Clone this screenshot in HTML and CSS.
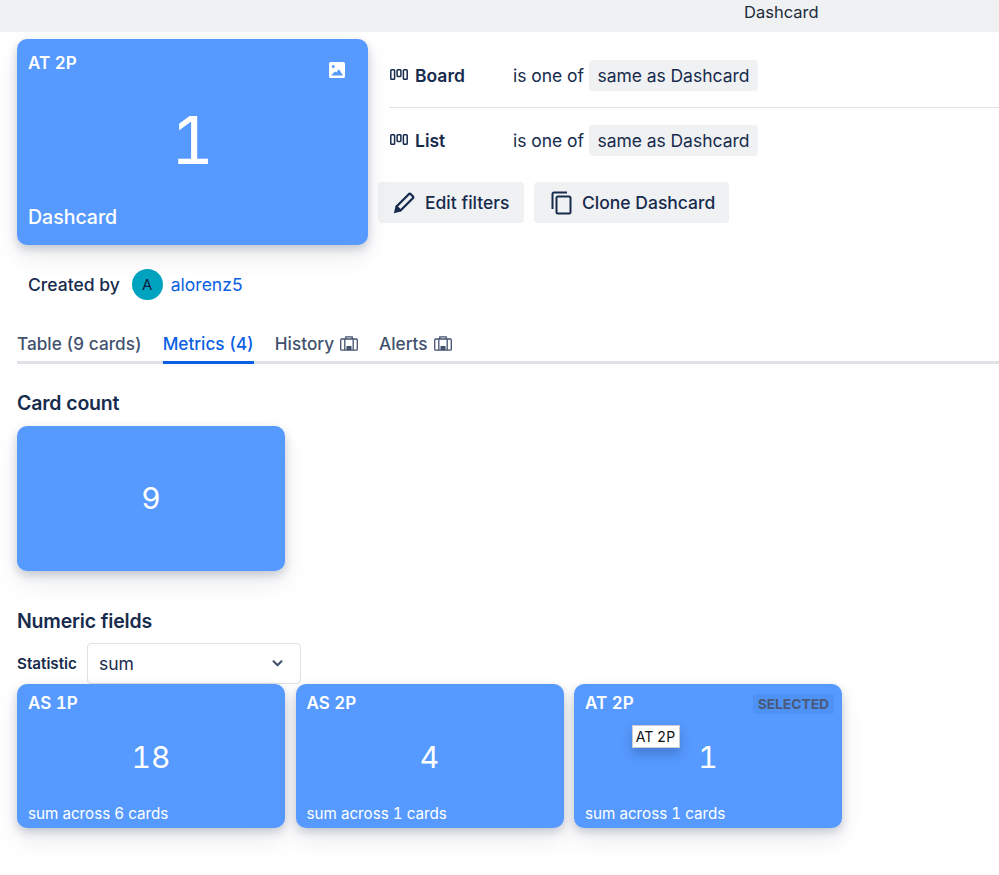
FILE: index.html
```html
<!DOCTYPE html>
<html lang="en">
<head>
<meta charset="utf-8">
<title>Dashcard</title>
<link rel="stylesheet" href="styles.css">
</head>
<body>
<header class="topbar"><span class="topbar-title">Dashcard</span></header>
<main class="page">
  <section class="hero">
    <div class="left-col">
      <div class="card card-hero">
        <div class="card-head">
          <span class="card-title-lg">AT 2P</span>
          <svg class="image-icon" viewBox="0 0 16 16" width="16" height="16"><path fill="#fff" fill-rule="evenodd" d="M1.5 0h13A1.5 1.5 0 0 1 16 1.5v13a1.5 1.5 0 0 1-1.500 1.500h-13A1.500 1.500 0 0 1 0 14.500v-13A1.500 1.500 0 0 1 1.500 0zM4.300 3a1.500 1.500 0 1 0 0 3 1.500 1.500 0 0 0 0-3zM2 13.500h12l-2.800-4.200-1.500-2-2.300 3.300-1.300-1.100z"/></svg>
        </div>
        <div class="hero-value">1</div>
        <div class="hero-foot">Dashcard</div>
      </div>
      <div class="created">
        <span>Created by</span>
        <span class="avatar">A</span>
        <a class="user">alorenz5</a>
      </div>
    </div>
    <div class="right-col">
      <div class="filter-row filter-row-first">
        <svg class="trello" viewBox="0 0 18 11" width="18" height="11"><g fill="none" stroke="#172b4d" stroke-width="1.500"><rect x=".8" y=".8" width="3.800" height="9.400" rx=".8"/><rect x="7.100" y=".8" width="3.800" height="6.600" rx=".8"/><rect x="13.400" y=".8" width="3.800" height="9.400" rx=".8"/></g></svg>
        <span class="filter-name">Board</span>
        <span class="filter-op">is one of</span>
        <span class="chip">same as Dashcard</span>
      </div>
      <div class="filter-row">
        <svg class="trello" viewBox="0 0 18 11" width="18" height="11"><g fill="none" stroke="#172b4d" stroke-width="1.500"><rect x=".8" y=".8" width="3.800" height="9.400" rx=".8"/><rect x="7.100" y=".8" width="3.800" height="6.600" rx=".8"/><rect x="13.400" y=".8" width="3.800" height="9.400" rx=".8"/></g></svg>
        <span class="filter-name">List</span>
        <span class="filter-op">is one of</span>
        <span class="chip">same as Dashcard</span>
      </div>
      <div class="actions">
        <button class="btn btn-edit">
          <svg viewBox="0 0 22 22" width="22" height="22"><path fill="none" stroke="#172b4d" stroke-width="2.300" stroke-linejoin="round" d="M15.800 2.200a1.500 1.500 0 0 1 2 0l2 2a1.500 1.500 0 0 1 0 2L7.500 18.500l-4-4z"/><path fill="#172b4d" d="M.8 21.200l1.800-7 5.200 5.200z"/></svg>
          <span>Edit filters</span>
        </button>
        <button class="btn btn-clone">
          <svg viewBox="0 0 21 24" width="21" height="24"><path fill="none" stroke="#172b4d" stroke-width="2" d="M16 1.500H3A1.500 1.500 0 0 0 1.500 3v15"/><rect x="5.500" y="5.500" width="14" height="17" rx="1.500" fill="none" stroke="#172b4d" stroke-width="2"/></svg>
          <span>Clone Dashcard</span>
        </button>
      </div>
    </div>
  </section>

  <nav class="tabs">
    <span class="tab">Table (9 cards)</span>
    <span class="tab tab-active">Metrics (4)</span>
    <span class="tab">History
      <svg class="case" viewBox="0 0 18 15" width="18" height="15"><path fill="none" stroke="#42526e" stroke-width="1.300" d="M5.800 3V.8h6.400V3M4.800 3v11M13.200 3v11"/><rect x=".7" y="3" width="16.600" height="11.200" rx="1" fill="none" stroke="#42526e" stroke-width="1.300"/><rect x="6.500" y="10" width="5" height="4" fill="#42526e"/></svg>
    </span>
    <span class="tab">Alerts
      <svg class="case" viewBox="0 0 18 15" width="18" height="15"><path fill="none" stroke="#42526e" stroke-width="1.300" d="M5.800 3V.8h6.400V3M4.800 3v11M13.200 3v11"/><rect x=".7" y="3" width="16.600" height="11.200" rx="1" fill="none" stroke="#42526e" stroke-width="1.300"/><rect x="6.500" y="10" width="5" height="4" fill="#42526e"/></svg>
    </span>
  </nav>

  <h2 class="section-title title-count">Card count</h2>
  <div class="card card-metric card-count"><span class="metric-value">9</span></div>

  <h2 class="section-title title-numeric">Numeric fields</h2>
  <div class="stat-row">
    <label class="stat-label">Statistic</label>
    <div class="select">
      <span>sum</span>
      <svg viewBox="0 0 12 8" width="11" height="7"><path fill="none" stroke="#42526e" stroke-width="2.400" stroke-linecap="round" stroke-linejoin="round" d="M1.500 1.500L6 6l4.500-4.500"/></svg>
    </div>
  </div>
  <div class="metric-grid">
    <div class="card card-metric">
      <div class="card-head"><span class="card-title">AS 1P</span></div>
      <span class="metric-value">18</span>
      <div class="card-foot">sum across 6 cards</div>
    </div>
    <div class="card card-metric">
      <div class="card-head"><span class="card-title">AS 2P</span></div>
      <span class="metric-value">4</span>
      <div class="card-foot">sum across 1 cards</div>
    </div>
    <div class="card card-metric">
      <div class="card-head"><span class="card-title">AT 2P</span><span class="selected">SELECTED</span></div>
      <span class="metric-value">1</span>
      <div class="card-foot">sum across 1 cards</div>
      <div class="tooltip">AT 2P</div>
    </div>
  </div>
</main>
</body>
</html>
```
FILE: styles.css
```css
* { box-sizing: border-box; }
html, body { margin: 0; padding: 0; }
body {
  width: 999px;
  height: 875px;
  overflow: hidden;
  background: #fff;
  color: #172b4d;
  font-family: Inter, "Liberation Sans", sans-serif;
  font-size: 17.5px;
  font-variant-numeric: tabular-nums;
}
.topbar {
  height: 32px;
  background: #f0f1f3;
  display: flex;
  justify-content: flex-start;
  padding-left: 744px;
  padding-top: 2px;
  color: #202a3a;
  font-size: 16.500px;
  line-height: 20px;
}
.page { padding: 7px 0 0 17px; }
.hero { display: flex; }
.left-col { width: 351px; flex: none; }
.card {
  position: relative;
  background: #579aff;
  color: #fff;
  border-radius: 10px;
  box-shadow: 0 4px 10px rgba(9, 30, 66, 0.2), 0 12px 26px rgba(9, 30, 66, 0.08);
}
.card-hero {
  height: 206px;
  padding: 13px 11px 16px;
  display: flex;
  flex-direction: column;
}
.card-head {
  display: flex;
  justify-content: space-between;
  align-items: flex-start;
}
.card-title-lg { font-size: 17px; font-weight: 600; line-height: 22px; }
.image-icon { margin: 10px 12px 0 0; }
.hero-value {
  flex: 1;
  display: flex;
  align-items: center;
  justify-content: center;
  font-size: 66px;
  line-height: 80px;
  padding-bottom: 4px;
}
.hero-foot { font-size: 19.500px; font-weight: 500; line-height: 24px; }
.created {
  display: flex;
  align-items: center;
  margin-top: 23px;
  padding-left: 11px;
  height: 32px;
  font-weight: 500;
}
.avatar {
  width: 31px;
  height: 31px;
  border-radius: 50%;
  background: #00a3bf;
  color: #091e42;
  font-weight: 400;
  font-size: 15px;
  display: flex;
  align-items: center;
  justify-content: center;
  margin: 0 8px 0 12px;
}
.user { color: #0b5fe3; font-weight: 400; }
.right-col { margin-left: 10px; flex: 1; min-width: 0; }
.filter-row {
  display: flex;
  align-items: center;
  margin-left: 11px;
  height: 64px;
}
.filter-row-first {
  margin-top: 5px;
  border-bottom: 1px solid #dfe1e6;
}
.trello { flex: none; margin: -2px 7px 0 1px; }
.filter-name { width: 98px; font-weight: 600; }
.filter-op { margin-right: 5px; }
.chip {
  background: #f0f1f3;
  border-radius: 4px;
  height: 31px;
  line-height: 32px;
  padding: 0 8.500px;
}
.actions { display: flex; gap: 10px; margin-top: 10px; }
.btn {
  display: flex;
  align-items: center;
  height: 41px;
  border: 0;
  border-radius: 4px;
  background: #f0f1f3;
  color: #172b4d;
  font: inherit;
  font-weight: 500;
}
.btn-edit { width: 146px; padding: 0 0 0 15px; gap: 10px; }
.btn-clone { width: 195px; padding: 0 0 0 17px; gap: 10px; }
.tabs {
  display: flex;
  gap: 21px;
  margin-top: 28px;
  height: 36px;
  border-bottom: 3px solid #dfe1e6;
  color: #42526e;
  font-size: 17.200px;
  font-weight: 500;
}
.tab {
  display: flex;
  align-items: flex-start;
  gap: 6px;
  height: 36px;
  line-height: 22px;
  padding-top: 5px;
}
.tab-active { color: #0b5fe3; border-bottom: 3px solid #0b5fe3; }
.case { margin-top: 3px; }
.section-title {
  margin: 0;
  font-size: 19.500px;
  font-weight: 600;
  line-height: 24px;
  letter-spacing: -0.2px;
}
.title-count { margin-top: 27px; }
.card-metric {
  width: 268px;
  height: 144px;
  padding: 8px 11px;
  flex: none;
}
.card-count {
  margin-top: 11px;
  height: 145px;
  display: flex;
  align-items: center;
  justify-content: center;
  padding-bottom: 10px;
}
.metric-value { font-size: 30px; line-height: 38px; }
.title-numeric { margin-top: 38px; }
.stat-row { display: flex; align-items: center; margin-top: 10px; height: 41px; }
.stat-label { width: 70px; font-size: 15.200px; font-weight: 600; }
.select {
  width: 214px;
  height: 41px;
  border: 1px solid #dfe1e6;
  border-radius: 4px;
  padding: 0 17px 0 11px;
  display: flex;
  align-items: center;
  justify-content: space-between;
}
.metric-grid { display: flex; gap: 10.500px; }
.metric-grid .card-metric { display: flex; flex-direction: column; }
.metric-grid .metric-value { text-align: center; margin-top: 24px; flex: 1; }
.card-title { font-size: 17px; font-weight: 600; line-height: 22px; }
.card-foot { font-size: 15.200px; line-height: 20px; margin-bottom: -4px; }
.selected {
  background: #4e92f5;
  color: #4a5a78;
  font-size: 13.800px;
  font-weight: 700;
  line-height: 20px;
  border-radius: 3px;
  padding: 0 5px;
  margin: 2px -3px 0 0;
}
.tooltip {
  position: absolute;
  left: 57.500px;
  top: 41px;
  width: 48px;
  height: 23px;
  background: #fff;
  border: 1px solid #c9ccd2;
  color: #111;
  font-size: 14px;
  line-height: 21px;
  text-align: center;
  box-shadow: 0 6px 12px rgba(9, 30, 66, 0.25);
}
```
